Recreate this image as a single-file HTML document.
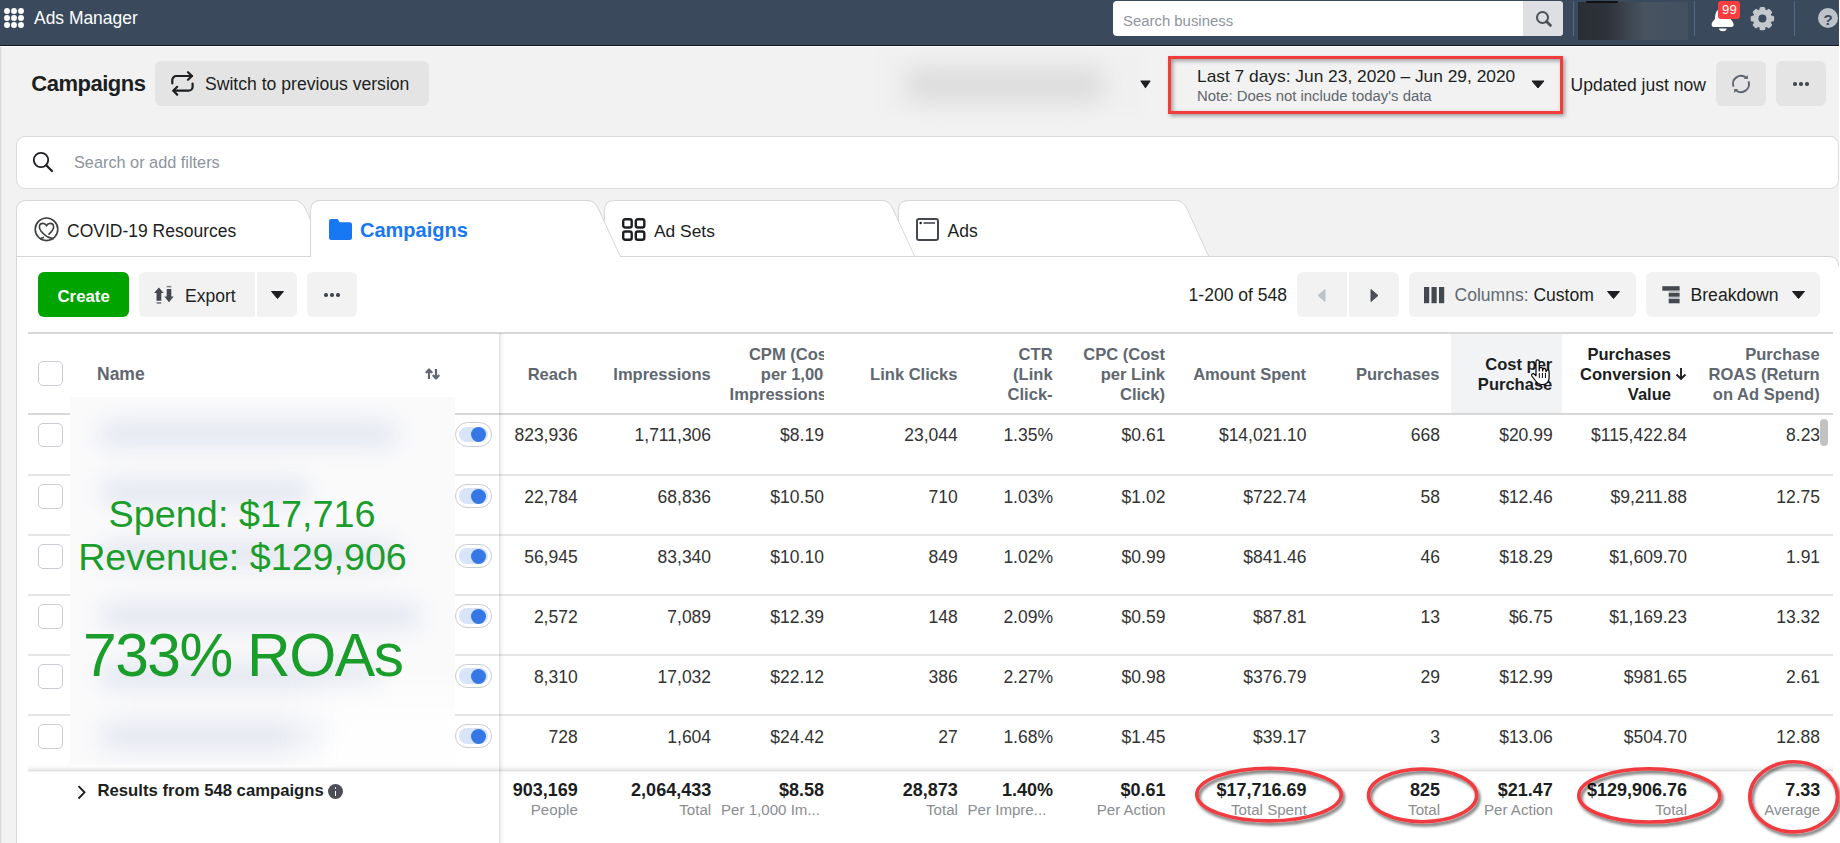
<!DOCTYPE html><html><head><meta charset="utf-8"><style>
html,body{margin:0;padding:0;overflow:hidden;}
body{width:1840px;height:843px;overflow:hidden;position:relative;background:#f2f2f2;font-family:"Liberation Sans", sans-serif;}
.t{position:absolute;white-space:nowrap;line-height:1;}
svg{position:absolute;overflow:visible;}
</style></head><body>
<div style="position:absolute;left:0px;top:0px;width:1840px;height:45px;background:#3a4a5c;"></div>
<div style="position:absolute;left:0px;top:45px;width:1840px;height:1px;background:#161b22;"></div>
<div style="position:absolute;left:0px;top:46px;width:1840px;height:1px;background:#fbfbfb;"></div>
<svg style="left:0;top:0" width="30" height="40"><circle cx="7" cy="11" r="2.95" fill="#fff"/><circle cx="7" cy="18" r="2.95" fill="#fff"/><circle cx="7" cy="25" r="2.95" fill="#fff"/><circle cx="14" cy="11" r="2.95" fill="#fff"/><circle cx="14" cy="18" r="2.95" fill="#fff"/><circle cx="14" cy="25" r="2.95" fill="#fff"/><circle cx="21" cy="11" r="2.95" fill="#fff"/><circle cx="21" cy="18" r="2.95" fill="#fff"/><circle cx="21" cy="25" r="2.95" fill="#fff"/></svg>
<div class="t" style="left:34.00px;top:10.46px;font-size:17.45px;color:#fff;">Ads Manager</div>
<div style="position:absolute;left:1113px;top:1px;width:450px;height:35px;background:#fff;border-radius:4px;"></div>
<div style="position:absolute;left:1523px;top:1px;width:40px;height:35px;background:#dddfe2;border-radius:0 4px 4px 0;"></div>
<div class="t" style="left:1123.00px;top:13.66px;font-size:14.9px;color:#90949c;">Search business</div>
<svg style="left:1535px;top:10px" width="18" height="18"><circle cx="7.5" cy="7.5" r="5.5" stroke="#4b4f56" stroke-width="2" fill="none"/><line x1="11.5" y1="11.5" x2="15.5" y2="15.5" stroke="#4b4f56" stroke-width="2.6" stroke-linecap="round"/></svg>
<div style="position:absolute;left:1573px;top:1px;width:1px;height:35px;background:#4f6885;"></div>
<div style="position:absolute;left:1578px;top:2px;width:110px;height:38px;background:linear-gradient(90deg,#2a2e35 0%,#2d3139 25%,#48535f 60%,#425060 100%);"></div>
<div style="position:absolute;left:1586px;top:1px;width:32px;height:2px;background:#111;border-radius:2px;"></div>
<div style="position:absolute;left:1694px;top:1px;width:1px;height:35px;background:#4f6885;"></div>
<svg style="left:1705px;top:0px" width="36" height="36"><path d="M10 19C10 12 12.5 8 17.8 8S25.6 12 25.6 19L27.6 21.8Q29 23.8 28.6 25.4Q28 27 26 27H9.2Q7.2 27 6.7 25.4Q6.2 23.8 7.6 21.8Z" fill="#fff"/><path d="M14.1 28.4h7.4a3.7 2.8 0 0 1-7.4 0z" fill="#fff"/></svg>
<div style="position:absolute;left:1718px;top:1px;width:22px;height:18px;background:#fa3e3e;border-radius:3px;"></div>
<div class="t" style="left:1718.40px;width:22px;text-align:center;top:3.26px;font-size:13.1px;color:#fff;">99</div>
<svg style="left:1745px;top:0px" width="36" height="36"><g transform="translate(17.4,18.6)" fill="#c4c7cc"><rect x="-2.9" y="-11.7" width="5.8" height="23.4" rx="1.6" transform="rotate(0)"/><rect x="-2.9" y="-11.7" width="5.8" height="23.4" rx="1.6" transform="rotate(45)"/><rect x="-2.9" y="-11.7" width="5.8" height="23.4" rx="1.6" transform="rotate(90)"/><rect x="-2.9" y="-11.7" width="5.8" height="23.4" rx="1.6" transform="rotate(135)"/><circle r="9.5"/></g><circle cx="17.4" cy="18.6" r="4" fill="#3a4a5c"/></svg>
<div style="position:absolute;left:1794px;top:1px;width:1px;height:35px;background:#4f6885;"></div>
<div style="position:absolute;left:1818px;top:8px;width:20px;height:20px;background:#bec3c9;border-radius:50%;"></div>
<div class="t" style="left:1818.00px;width:20px;text-align:center;top:11.50px;font-size:15px;font-weight:700;color:#3a4a5c;">?</div>
<div style="position:absolute;left:0px;top:47px;width:1px;height:796px;background:#d6d9dd;"></div>
<div style="position:absolute;left:1px;top:47px;width:1px;height:796px;background:#e8e9eb;"></div>
<div class="t" style="left:31.30px;top:72.50px;font-size:22px;font-weight:700;color:#1c1e21;letter-spacing:-0.5px;">Campaigns</div>
<div style="position:absolute;left:155px;top:61px;width:274px;height:45px;background:#e4e4e4;border-radius:6px;"></div>
<svg style="left:160px;top:62px" width="50" height="40"><g stroke="#1c1e21" stroke-width="2.2" fill="none" stroke-linecap="round" stroke-linejoin="round"><path d="M12.3 21.5V18a4 4 0 0 1 4-4H31.8"/><path d="M28 10.2L32 14 28 17.8"/><path d="M32.6 21.6V24.7a4 4 0 0 1-4 4H13.6"/><path d="M17.2 24.8L13.3 28.7 17.2 32.6"/></g></svg>
<div class="t" style="left:205.00px;top:76.16px;font-size:17.6px;color:#1c1e21;">Switch to previous version</div>
<div style="position:absolute;left:880px;top:52px;width:262px;height:62px;background:#f0f0f0;filter:blur(2px);"></div>
<div style="position:absolute;left:905px;top:68px;width:200px;height:34px;background:#dcdcdc;border-radius:17px;filter:blur(11px);"></div>
<svg style="left:1140px;top:80px" width="11" height="9"><path d="M1 1h9l-4.5 6.5z" fill="#1c1e21" stroke="#1c1e21" stroke-width="1.2" stroke-linejoin="round"/></svg>
<div style="position:absolute;left:1168px;top:56px;width:389px;height:52px;border:3px solid #f23b3b;box-shadow:2px 2px 4px rgba(0,0,0,.35), inset 2px 2px 4px rgba(0,0,0,.35);"></div>
<div class="t" style="left:1197.00px;top:68.16px;font-size:17.35px;color:#1c1e21;">Last 7 days: Jun 23, 2020 – Jun 29, 2020</div>
<div class="t" style="left:1197.00px;top:88.66px;font-size:14.9px;color:#606770;">Note: Does not include today&#39;s data</div>
<svg style="left:1531px;top:80px" width="14" height="9"><path d="M1 1h12l-6 7z" fill="#1c1e21" stroke="#1c1e21" stroke-width="1" stroke-linejoin="round"/></svg>
<div class="t" style="left:1570.60px;top:77.16px;font-size:17.5px;color:#1c1e21;">Updated just now</div>
<div style="position:absolute;left:1716px;top:61px;width:50px;height:45px;background:#e4e4e4;border-radius:6px;"></div>
<svg style="left:1721px;top:64px" width="40" height="40"><g stroke="#606770" stroke-width="2" fill="none"><path d="M12.5 22.7A8 8 0 0 1 25.2 13.8"/><path d="M27.5 17.3A8 8 0 0 1 14.8 26.2"/></g><path d="M26.9 11v4h-4z" fill="#606770"/><path d="M13.1 29v-4h4z" fill="#606770"/></svg>
<div style="position:absolute;left:1776px;top:61px;width:50px;height:45px;background:#e4e4e4;border-radius:6px;"></div>
<div style="position:absolute;left:1793.3px;top:82.3px;width:3.4px;height:3.4px;background:#444950;border-radius:50%;"></div>
<div style="position:absolute;left:1799.3px;top:82.3px;width:3.4px;height:3.4px;background:#444950;border-radius:50%;"></div>
<div style="position:absolute;left:1805.3px;top:82.3px;width:3.4px;height:3.4px;background:#444950;border-radius:50%;"></div>
<div style="position:absolute;left:16px;top:136px;width:1823px;height:53px;background:#fff;border:1px solid #d9dadc;border-radius:9px;box-sizing:border-box;"></div>
<svg style="left:32px;top:151px" width="22" height="22"><circle cx="9" cy="9" r="7.2" stroke="#1c1e21" stroke-width="1.8" fill="none"/><line x1="14.2" y1="14.2" x2="20" y2="20" stroke="#1c1e21" stroke-width="2.2" stroke-linecap="round"/></svg>
<div class="t" style="left:74.00px;top:153.65px;font-size:16.3px;color:#8d949e;">Search or add filters</div>
<svg style="left:0;top:0" width="1840" height="843"><path d="M16.5,843 L16.5,256.5 L1829,256.5 Q1838.5,256.5 1838.5,266.0 L1840,266.0 L1840,843 Z" fill="#fff" stroke="none"/><path d="M16.5,843 L16.5,256.5 L1829,256.5 Q1838.5,256.5 1838.5,266.0" fill="none" stroke="#d4d6d9" stroke-width="1"/><path d="M898.5,256.5 L898.5,210.5 Q898.5,200.5 908.5,200.5 L1176.5,200.5 Q1183.2,200.5 1187.0,209.0 L1208.8,256.5 Z" fill="#fff" stroke="#d4d6d9" stroke-width="1"/><path d="M604.5,256.5 L604.5,210.5 Q604.5,200.5 614.5,200.5 L882.5,200.5 Q889.2,200.5 893.0,209.0 L914.8,256.5 Z" fill="#fff" stroke="#d4d6d9" stroke-width="1"/><path d="M16.5,256.5 L16.5,210.5 Q16.5,200.5 26.5,200.5 L295,200.5 Q301.7,200.5 305.5,209.0 L327.3,256.5 Z" fill="#fff" stroke="#d4d6d9" stroke-width="1"/><path d="M310.5,256.5 L310.5,210.5 Q310.5,200.5 320.5,200.5 L588,200.5 Q594.7,200.5 598.5,209.0 L620.3,256.5 Z" fill="#fff" stroke="none"/><path d="M310.5,256.5 L310.5,210.5 Q310.5,200.5 320.5,200.5 L588,200.5 Q594.7,200.5 598.5,209.0 L620.3,256.5" fill="none" stroke="#d4d6d9" stroke-width="1"/><rect x="311" y="255.5" width="309" height="3" fill="#fff"/></svg>
<div style="position:absolute;left:1839px;top:0px;width:1px;height:843px;background:#fff;"></div>
<svg style="left:30px;top:213px" width="32" height="32"><g stroke="#3e4042" stroke-width="1.6" fill="none" stroke-linecap="round"><circle cx="16.5" cy="16.3" r="11.3"/><path d="M19 21.1C21.5 18.8 23.6 16.5 23.6 14C23.6 11.8 22 10.4 20 10.4C18.5 10.4 17.2 11.3 16.5 12.6C15.8 11.3 14.5 10.4 13 10.4C11 10.4 9.4 11.8 9.4 14C9.4 17.5 14 21.5 17.5 23.8C19.5 25 21.5 25.4 23.4 25.6"/><path d="M13.3 24.4C12.4 24.8 11.5 25.3 10.6 25.8"/></g></svg>
<div class="t" style="left:67.00px;top:222.66px;font-size:17.5px;color:#1c1e21;">COVID-19 Resources</div>
<svg style="left:329px;top:219px" width="23" height="21" viewBox="0 0 23 21"><path d="M0 2.2A2.2 2.2 0 0 1 2.2 0h6.3l2.2 3.2h10.1A2.2 2.2 0 0 1 23 5.4v13.4A2.2 2.2 0 0 1 20.8 21H2.2A2.2 2.2 0 0 1 0 18.8z" fill="#1877f2"/></svg>
<div class="t" style="left:360.00px;top:219.80px;font-size:20px;font-weight:700;color:#1877f2;">Campaigns</div>
<svg style="left:622px;top:218px" width="24" height="23" viewBox="0 0 24 23"><g stroke="#1c1e21" stroke-width="2.4" fill="none"><rect x="1.2" y="1.2" width="8.5" height="8.3" rx="2"/><rect x="13.8" y="1.2" width="8.5" height="8.3" rx="2"/><rect x="1.2" y="13.5" width="8.5" height="8.3" rx="2"/><rect x="13.8" y="13.5" width="8.5" height="8.3" rx="2"/></g></svg>
<div class="t" style="left:654.00px;top:222.66px;font-size:17.4px;color:#1c1e21;">Ad Sets</div>
<svg style="left:916px;top:218px" width="23" height="23" viewBox="0 0 23 23"><rect x="1" y="1" width="21" height="21" rx="2" stroke="#444950" stroke-width="2" fill="none"/><circle cx="4.6" cy="5" r="1.2" fill="#1c1e21"/><line x1="7.5" y1="5" x2="19" y2="5" stroke="#444950" stroke-width="1.6"/></svg>
<div class="t" style="left:947.50px;top:222.66px;font-size:17.5px;color:#1c1e21;">Ads</div>
<div style="position:absolute;left:38px;top:272px;width:91px;height:45px;background:#00a400;border-radius:6px;"></div>
<div class="t" style="left:57.50px;top:288.70px;font-size:16.8px;font-weight:700;color:#fff;">Create</div>
<div style="position:absolute;left:139px;top:272px;width:115.6px;height:45px;background:#f2f2f2;border-radius:6px 0 0 6px;"></div>
<div style="position:absolute;left:257px;top:272px;width:39.7px;height:45px;background:#f2f2f2;border-radius:0 6px 6px 0;"></div>
<svg style="left:148px;top:280px" width="32" height="30"><g fill="#444950"><path d="M10.9 7.4L6.1 12.9H8.5V20.8H13.3V12.9H15.7Z"/><path d="M18.7 8.9H23.3V16.4H25.7L21 22.2 16.3 16.4H18.7Z"/></g><g fill="#7d8288"><rect x="8.6" y="22.1" width="4.6" height="1.7"/><rect x="18.7" y="5.9" width="4.6" height="1.5"/></g></svg>
<div class="t" style="left:185.00px;top:287.66px;font-size:17.5px;color:#1c1e21;">Export</div>
<svg style="left:270.5px;top:291px" width="13" height="9"><path d="M0.5 0.5h12l-6 7z" fill="#1c1e21" stroke="#1c1e21" stroke-width="1" stroke-linejoin="round"/></svg>
<div style="position:absolute;left:307px;top:272px;width:50px;height:45px;background:#f2f2f2;border-radius:6px;"></div>
<div style="position:absolute;left:324.3px;top:293.3px;width:3.4px;height:3.4px;background:#444950;border-radius:50%;"></div>
<div style="position:absolute;left:330.3px;top:293.3px;width:3.4px;height:3.4px;background:#444950;border-radius:50%;"></div>
<div style="position:absolute;left:336.3px;top:293.3px;width:3.4px;height:3.4px;background:#444950;border-radius:50%;"></div>
<div class="t" style="left:1188.60px;top:287.16px;font-size:17.55px;color:#1c1e21;">1-200 of 548</div>
<div style="position:absolute;left:1297px;top:272px;width:50px;height:44.5px;background:#f2f2f2;border-radius:6px 0 0 6px;"></div>
<div style="position:absolute;left:1349px;top:272px;width:50px;height:44.5px;background:#f2f2f2;border-radius:0 6px 6px 0;"></div>
<svg style="left:1317px;top:289px" width="9" height="13"><path d="M8 0.5v12l-7-6z" fill="#bec3c9" stroke="#bec3c9" stroke-width="1" stroke-linejoin="round"/></svg>
<svg style="left:1370px;top:289px" width="9" height="13"><path d="M1 0.5v12l7-6z" fill="#4b4f56" stroke="#4b4f56" stroke-width="1" stroke-linejoin="round"/></svg>
<div style="position:absolute;left:1409px;top:272px;width:227px;height:44.5px;background:#f2f2f2;border-radius:6px;"></div>
<svg style="left:1424px;top:287px" width="21" height="17"><rect x="0" y="0" width="5.2" height="16.2" fill="#444950"/><rect x="7.5" y="0" width="5.2" height="16.2" fill="#444950"/><rect x="15" y="0" width="5.2" height="16.2" fill="#444950"/></svg>
<div class="t" style="left:1454.50px;top:287.16px;font-size:17.55px;color:#606770;">Columns: <span style="color:#1c1e21">Custom</span></div>
<svg style="left:1606.5px;top:291px" width="13" height="9"><path d="M0.5 0.5h12l-6 7z" fill="#1c1e21" stroke="#1c1e21" stroke-width="1" stroke-linejoin="round"/></svg>
<div style="position:absolute;left:1646px;top:272px;width:174px;height:44.5px;background:#f2f2f2;border-radius:6px;"></div>
<svg style="left:1655px;top:280px" width="30" height="30"><g fill="#444950"><rect x="7.3" y="6.2" width="17.3" height="4.5"/><rect x="13.7" y="12.8" width="10.9" height="4"/><rect x="13.7" y="19" width="10.9" height="4.3"/></g><g fill="#bcc0c4"><rect x="13.7" y="10.7" width="10.9" height="2.1"/><rect x="13.7" y="16.8" width="10.9" height="2.2"/></g></svg>
<div class="t" style="left:1690.50px;top:287.16px;font-size:17.6px;color:#1c1e21;">Breakdown</div>
<svg style="left:1791.5px;top:291px" width="13" height="9"><path d="M0.5 0.5h12l-6 7z" fill="#1c1e21" stroke="#1c1e21" stroke-width="1" stroke-linejoin="round"/></svg>
<div style="position:absolute;left:28px;top:332px;width:1805px;height:1.5px;background:#d8d8d8;"></div>
<div style="position:absolute;left:1451px;top:333.5px;width:111px;height:79.5px;background:#f2f3f5;"></div>
<div style="position:absolute;left:28px;top:413px;width:1805px;height:1.5px;background:#d8d8d8;"></div>
<div style="position:absolute;left:28px;top:474px;width:1805px;height:2px;background:#e6e6e6;"></div>
<div style="position:absolute;left:28px;top:534px;width:1805px;height:2px;background:#e6e6e6;"></div>
<div style="position:absolute;left:28px;top:594px;width:1805px;height:2px;background:#e6e6e6;"></div>
<div style="position:absolute;left:28px;top:654px;width:1805px;height:2px;background:#e6e6e6;"></div>
<div style="position:absolute;left:28px;top:714px;width:1805px;height:2px;background:#e6e6e6;"></div>
<div style="position:absolute;left:38px;top:361.3px;width:24.7px;height:24.8px;box-sizing:border-box;border:1.2px solid #c8ccd2;border-radius:5px;background:#fff;"></div>
<div class="t" style="left:97.00px;top:366.30px;font-size:17.5px;font-weight:700;color:#606770;">Name</div>
<svg style="left:425px;top:368px" width="15" height="12" viewBox="0 0 15 12"><path d="M4 11V2.5M0.8 5L4 1.5 7.2 5" stroke="#606770" stroke-width="2.2" fill="none" stroke-linejoin="round"/><path d="M11 1V9.5M7.8 7L11 10.5 14.2 7" stroke="#606770" stroke-width="2.2" fill="none" stroke-linejoin="round"/></svg>
<div class="t" style="left:377.30px;width:200px;text-align:right;top:367.20px;font-size:16.55px;font-weight:700;color:#606770;">Reach</div>
<div class="t" style="left:510.70px;width:200px;text-align:right;top:367.20px;font-size:16.55px;font-weight:700;color:#606770;">Impressions</div>
<div style="position:absolute;left:700px;top:340px;width:123.5px;height:70px;overflow:hidden">
<div class="t" style="left:-67.50px;width:200px;text-align:right;top:7.00px;font-size:16.55px;font-weight:700;color:#606770;">CPM (Cost</div>
</div>
<div style="position:absolute;left:700px;top:340px;width:123.5px;height:70px;overflow:hidden">
<div class="t" style="left:-67.50px;width:200px;text-align:right;top:27.00px;font-size:16.55px;font-weight:700;color:#606770;">per 1,000</div>
</div>
<div style="position:absolute;left:700px;top:340px;width:123.5px;height:70px;overflow:hidden">
<div class="t" style="left:-67.50px;width:200px;text-align:right;top:47.00px;font-size:16.55px;font-weight:700;color:#606770;">Impressions)</div>
</div>
<div class="t" style="left:757.40px;width:200px;text-align:right;top:367.20px;font-size:16.55px;font-weight:700;color:#606770;">Link Clicks</div>
<div class="t" style="left:852.60px;width:200px;text-align:right;top:347.00px;font-size:16.55px;font-weight:700;color:#606770;">CTR</div>
<div class="t" style="left:852.60px;width:200px;text-align:right;top:367.00px;font-size:16.55px;font-weight:700;color:#606770;">(Link</div>
<div class="t" style="left:852.60px;width:200px;text-align:right;top:387.00px;font-size:16.55px;font-weight:700;color:#606770;">Click-</div>
<div class="t" style="left:965.00px;width:200px;text-align:right;top:347.00px;font-size:16.55px;font-weight:700;color:#606770;">CPC (Cost</div>
<div class="t" style="left:965.00px;width:200px;text-align:right;top:367.00px;font-size:16.55px;font-weight:700;color:#606770;">per Link</div>
<div class="t" style="left:965.00px;width:200px;text-align:right;top:387.00px;font-size:16.55px;font-weight:700;color:#606770;">Click)</div>
<div class="t" style="left:1106.10px;width:200px;text-align:right;top:367.20px;font-size:16.55px;font-weight:700;color:#606770;">Amount Spent</div>
<div class="t" style="left:1239.50px;width:200px;text-align:right;top:367.20px;font-size:16.55px;font-weight:700;color:#606770;">Purchases</div>
<div class="t" style="left:1352.30px;width:200px;text-align:right;top:357.10px;font-size:16.55px;font-weight:700;color:#1c1e21;">Cost per</div>
<div class="t" style="left:1352.30px;width:200px;text-align:right;top:376.90px;font-size:16.55px;font-weight:700;color:#1c1e21;">Purchase</div>
<div class="t" style="left:1471.00px;width:200px;text-align:right;top:347.00px;font-size:16.55px;font-weight:700;color:#1c1e21;">Purchases</div>
<div class="t" style="left:1471.00px;width:200px;text-align:right;top:367.00px;font-size:16.55px;font-weight:700;color:#1c1e21;">Conversion</div>
<div class="t" style="left:1471.00px;width:200px;text-align:right;top:387.00px;font-size:16.55px;font-weight:700;color:#1c1e21;">Value</div>
<svg style="left:1675px;top:367px" width="12" height="13" viewBox="0 0 12 13"><path d="M6 1V11.5M1.5 7.5L6 12 10.5 7.5" stroke="#1c1e21" stroke-width="1.9" fill="none"/></svg>
<div class="t" style="left:1619.70px;width:200px;text-align:right;top:347.00px;font-size:16.55px;font-weight:700;color:#606770;">Purchase</div>
<div class="t" style="left:1619.70px;width:200px;text-align:right;top:367.00px;font-size:16.55px;font-weight:700;color:#606770;">ROAS (Return</div>
<div class="t" style="left:1619.70px;width:200px;text-align:right;top:387.00px;font-size:16.55px;font-weight:700;color:#606770;">on Ad Spend)</div>
<div style="position:absolute;left:38px;top:422.5px;width:24.7px;height:24.8px;box-sizing:border-box;border:1.2px solid #c8ccd2;border-radius:5px;background:#fff;"></div>
<div style="position:absolute;left:455px;top:422.2px;width:36.7px;height:24.4px;box-sizing:border-box;border:1.2px solid #c9ccd1;border-radius:13px;background:#fff;"></div>
<div style="position:absolute;left:459px;top:426.7px;width:28.5px;height:15.7px;background:#d8e4fb;border-radius:8px;"></div>
<div style="position:absolute;left:471px;top:427.09999999999997px;width:15.2px;height:15.2px;background:#3578e5;border-radius:50%;"></div>
<div class="t" style="left:377.70px;width:200px;text-align:right;top:427.06px;font-size:17.5px;color:#333;">823,936</div>
<div class="t" style="left:511.10px;width:200px;text-align:right;top:427.06px;font-size:17.5px;color:#333;">1,711,306</div>
<div class="t" style="left:623.90px;width:200px;text-align:right;top:427.06px;font-size:17.5px;color:#333;">$8.19</div>
<div class="t" style="left:757.80px;width:200px;text-align:right;top:427.06px;font-size:17.5px;color:#333;">23,044</div>
<div class="t" style="left:853.00px;width:200px;text-align:right;top:427.06px;font-size:17.5px;color:#333;">1.35%</div>
<div class="t" style="left:965.40px;width:200px;text-align:right;top:427.06px;font-size:17.5px;color:#333;">$0.61</div>
<div class="t" style="left:1106.50px;width:200px;text-align:right;top:427.06px;font-size:17.5px;color:#333;">$14,021.10</div>
<div class="t" style="left:1239.90px;width:200px;text-align:right;top:427.06px;font-size:17.5px;color:#333;">668</div>
<div class="t" style="left:1352.70px;width:200px;text-align:right;top:427.06px;font-size:17.5px;color:#333;">$20.99</div>
<div class="t" style="left:1487.00px;width:200px;text-align:right;top:427.06px;font-size:17.5px;color:#333;">$115,422.84</div>
<div class="t" style="left:1620.10px;width:200px;text-align:right;top:427.06px;font-size:17.5px;color:#333;">8.23</div>
<div style="position:absolute;left:38px;top:484px;width:24.7px;height:24.8px;box-sizing:border-box;border:1.2px solid #c8ccd2;border-radius:5px;background:#fff;"></div>
<div style="position:absolute;left:455px;top:483.7px;width:36.7px;height:24.4px;box-sizing:border-box;border:1.2px solid #c9ccd1;border-radius:13px;background:#fff;"></div>
<div style="position:absolute;left:459px;top:488.2px;width:28.5px;height:15.7px;background:#d8e4fb;border-radius:8px;"></div>
<div style="position:absolute;left:471px;top:488.59999999999997px;width:15.2px;height:15.2px;background:#3578e5;border-radius:50%;"></div>
<div class="t" style="left:377.70px;width:200px;text-align:right;top:488.76px;font-size:17.5px;color:#333;">22,784</div>
<div class="t" style="left:511.10px;width:200px;text-align:right;top:488.76px;font-size:17.5px;color:#333;">68,836</div>
<div class="t" style="left:623.90px;width:200px;text-align:right;top:488.76px;font-size:17.5px;color:#333;">$10.50</div>
<div class="t" style="left:757.80px;width:200px;text-align:right;top:488.76px;font-size:17.5px;color:#333;">710</div>
<div class="t" style="left:853.00px;width:200px;text-align:right;top:488.76px;font-size:17.5px;color:#333;">1.03%</div>
<div class="t" style="left:965.40px;width:200px;text-align:right;top:488.76px;font-size:17.5px;color:#333;">$1.02</div>
<div class="t" style="left:1106.50px;width:200px;text-align:right;top:488.76px;font-size:17.5px;color:#333;">$722.74</div>
<div class="t" style="left:1239.90px;width:200px;text-align:right;top:488.76px;font-size:17.5px;color:#333;">58</div>
<div class="t" style="left:1352.70px;width:200px;text-align:right;top:488.76px;font-size:17.5px;color:#333;">$12.46</div>
<div class="t" style="left:1487.00px;width:200px;text-align:right;top:488.76px;font-size:17.5px;color:#333;">$9,211.88</div>
<div class="t" style="left:1620.10px;width:200px;text-align:right;top:488.76px;font-size:17.5px;color:#333;">12.75</div>
<div style="position:absolute;left:38px;top:544px;width:24.7px;height:24.8px;box-sizing:border-box;border:1.2px solid #c8ccd2;border-radius:5px;background:#fff;"></div>
<div style="position:absolute;left:455px;top:543.7px;width:36.7px;height:24.4px;box-sizing:border-box;border:1.2px solid #c9ccd1;border-radius:13px;background:#fff;"></div>
<div style="position:absolute;left:459px;top:548.2px;width:28.5px;height:15.7px;background:#d8e4fb;border-radius:8px;"></div>
<div style="position:absolute;left:471px;top:548.6px;width:15.2px;height:15.2px;background:#3578e5;border-radius:50%;"></div>
<div class="t" style="left:377.70px;width:200px;text-align:right;top:548.86px;font-size:17.5px;color:#333;">56,945</div>
<div class="t" style="left:511.10px;width:200px;text-align:right;top:548.86px;font-size:17.5px;color:#333;">83,340</div>
<div class="t" style="left:623.90px;width:200px;text-align:right;top:548.86px;font-size:17.5px;color:#333;">$10.10</div>
<div class="t" style="left:757.80px;width:200px;text-align:right;top:548.86px;font-size:17.5px;color:#333;">849</div>
<div class="t" style="left:853.00px;width:200px;text-align:right;top:548.86px;font-size:17.5px;color:#333;">1.02%</div>
<div class="t" style="left:965.40px;width:200px;text-align:right;top:548.86px;font-size:17.5px;color:#333;">$0.99</div>
<div class="t" style="left:1106.50px;width:200px;text-align:right;top:548.86px;font-size:17.5px;color:#333;">$841.46</div>
<div class="t" style="left:1239.90px;width:200px;text-align:right;top:548.86px;font-size:17.5px;color:#333;">46</div>
<div class="t" style="left:1352.70px;width:200px;text-align:right;top:548.86px;font-size:17.5px;color:#333;">$18.29</div>
<div class="t" style="left:1487.00px;width:200px;text-align:right;top:548.86px;font-size:17.5px;color:#333;">$1,609.70</div>
<div class="t" style="left:1620.10px;width:200px;text-align:right;top:548.86px;font-size:17.5px;color:#333;">1.91</div>
<div style="position:absolute;left:38px;top:604px;width:24.7px;height:24.8px;box-sizing:border-box;border:1.2px solid #c8ccd2;border-radius:5px;background:#fff;"></div>
<div style="position:absolute;left:455px;top:603.7px;width:36.7px;height:24.4px;box-sizing:border-box;border:1.2px solid #c9ccd1;border-radius:13px;background:#fff;"></div>
<div style="position:absolute;left:459px;top:608.2px;width:28.5px;height:15.7px;background:#d8e4fb;border-radius:8px;"></div>
<div style="position:absolute;left:471px;top:608.6px;width:15.2px;height:15.2px;background:#3578e5;border-radius:50%;"></div>
<div class="t" style="left:377.70px;width:200px;text-align:right;top:608.66px;font-size:17.5px;color:#333;">2,572</div>
<div class="t" style="left:511.10px;width:200px;text-align:right;top:608.66px;font-size:17.5px;color:#333;">7,089</div>
<div class="t" style="left:623.90px;width:200px;text-align:right;top:608.66px;font-size:17.5px;color:#333;">$12.39</div>
<div class="t" style="left:757.80px;width:200px;text-align:right;top:608.66px;font-size:17.5px;color:#333;">148</div>
<div class="t" style="left:853.00px;width:200px;text-align:right;top:608.66px;font-size:17.5px;color:#333;">2.09%</div>
<div class="t" style="left:965.40px;width:200px;text-align:right;top:608.66px;font-size:17.5px;color:#333;">$0.59</div>
<div class="t" style="left:1106.50px;width:200px;text-align:right;top:608.66px;font-size:17.5px;color:#333;">$87.81</div>
<div class="t" style="left:1239.90px;width:200px;text-align:right;top:608.66px;font-size:17.5px;color:#333;">13</div>
<div class="t" style="left:1352.70px;width:200px;text-align:right;top:608.66px;font-size:17.5px;color:#333;">$6.75</div>
<div class="t" style="left:1487.00px;width:200px;text-align:right;top:608.66px;font-size:17.5px;color:#333;">$1,169.23</div>
<div class="t" style="left:1620.10px;width:200px;text-align:right;top:608.66px;font-size:17.5px;color:#333;">13.32</div>
<div style="position:absolute;left:38px;top:664px;width:24.7px;height:24.8px;box-sizing:border-box;border:1.2px solid #c8ccd2;border-radius:5px;background:#fff;"></div>
<div style="position:absolute;left:455px;top:663.7px;width:36.7px;height:24.4px;box-sizing:border-box;border:1.2px solid #c9ccd1;border-radius:13px;background:#fff;"></div>
<div style="position:absolute;left:459px;top:668.2px;width:28.5px;height:15.7px;background:#d8e4fb;border-radius:8px;"></div>
<div style="position:absolute;left:471px;top:668.6px;width:15.2px;height:15.2px;background:#3578e5;border-radius:50%;"></div>
<div class="t" style="left:377.70px;width:200px;text-align:right;top:668.86px;font-size:17.5px;color:#333;">8,310</div>
<div class="t" style="left:511.10px;width:200px;text-align:right;top:668.86px;font-size:17.5px;color:#333;">17,032</div>
<div class="t" style="left:623.90px;width:200px;text-align:right;top:668.86px;font-size:17.5px;color:#333;">$22.12</div>
<div class="t" style="left:757.80px;width:200px;text-align:right;top:668.86px;font-size:17.5px;color:#333;">386</div>
<div class="t" style="left:853.00px;width:200px;text-align:right;top:668.86px;font-size:17.5px;color:#333;">2.27%</div>
<div class="t" style="left:965.40px;width:200px;text-align:right;top:668.86px;font-size:17.5px;color:#333;">$0.98</div>
<div class="t" style="left:1106.50px;width:200px;text-align:right;top:668.86px;font-size:17.5px;color:#333;">$376.79</div>
<div class="t" style="left:1239.90px;width:200px;text-align:right;top:668.86px;font-size:17.5px;color:#333;">29</div>
<div class="t" style="left:1352.70px;width:200px;text-align:right;top:668.86px;font-size:17.5px;color:#333;">$12.99</div>
<div class="t" style="left:1487.00px;width:200px;text-align:right;top:668.86px;font-size:17.5px;color:#333;">$981.65</div>
<div class="t" style="left:1620.10px;width:200px;text-align:right;top:668.86px;font-size:17.5px;color:#333;">2.61</div>
<div style="position:absolute;left:38px;top:724px;width:24.7px;height:24.8px;box-sizing:border-box;border:1.2px solid #c8ccd2;border-radius:5px;background:#fff;"></div>
<div style="position:absolute;left:455px;top:723.7px;width:36.7px;height:24.4px;box-sizing:border-box;border:1.2px solid #c9ccd1;border-radius:13px;background:#fff;"></div>
<div style="position:absolute;left:459px;top:728.2px;width:28.5px;height:15.7px;background:#d8e4fb;border-radius:8px;"></div>
<div style="position:absolute;left:471px;top:728.6px;width:15.2px;height:15.2px;background:#3578e5;border-radius:50%;"></div>
<div class="t" style="left:377.70px;width:200px;text-align:right;top:728.76px;font-size:17.5px;color:#333;">728</div>
<div class="t" style="left:511.10px;width:200px;text-align:right;top:728.76px;font-size:17.5px;color:#333;">1,604</div>
<div class="t" style="left:623.90px;width:200px;text-align:right;top:728.76px;font-size:17.5px;color:#333;">$24.42</div>
<div class="t" style="left:757.80px;width:200px;text-align:right;top:728.76px;font-size:17.5px;color:#333;">27</div>
<div class="t" style="left:853.00px;width:200px;text-align:right;top:728.76px;font-size:17.5px;color:#333;">1.68%</div>
<div class="t" style="left:965.40px;width:200px;text-align:right;top:728.76px;font-size:17.5px;color:#333;">$1.45</div>
<div class="t" style="left:1106.50px;width:200px;text-align:right;top:728.76px;font-size:17.5px;color:#333;">$39.17</div>
<div class="t" style="left:1239.90px;width:200px;text-align:right;top:728.76px;font-size:17.5px;color:#333;">3</div>
<div class="t" style="left:1352.70px;width:200px;text-align:right;top:728.76px;font-size:17.5px;color:#333;">$13.06</div>
<div class="t" style="left:1487.00px;width:200px;text-align:right;top:728.76px;font-size:17.5px;color:#333;">$504.70</div>
<div class="t" style="left:1620.10px;width:200px;text-align:right;top:728.76px;font-size:17.5px;color:#333;">12.88</div>
<div style="position:absolute;left:1819.5px;top:419px;width:8.2px;height:26.6px;background:#c2c2c2;border-radius:4px;"></div>
<div style="position:absolute;left:28px;top:765px;width:1805px;height:6px;background:linear-gradient(rgba(0,0,0,0),rgba(0,0,0,.04) 55%,rgba(0,0,0,.13));"></div>
<div style="position:absolute;left:28px;top:771px;width:1805px;height:1.5px;background:linear-gradient(rgba(0,0,0,.05),rgba(0,0,0,0));"></div>
<svg style="left:77px;top:785px" width="10" height="15"><path d="M1.5 1.2L7.5 7.3 1.5 13.5" stroke="#1c1e21" stroke-width="1.9" fill="none"/></svg>
<div class="t" style="left:97.50px;top:782.80px;font-size:16.7px;font-weight:700;color:#1c1e21;">Results from 548 campaigns</div>
<div style="position:absolute;left:328px;top:784px;width:15px;height:15px;background:#4b4f56;border-radius:50%;"></div>
<div style="position:absolute;left:334.6px;top:791px;width:1.9px;height:5px;background:#fff;"></div>
<div style="position:absolute;left:334.6px;top:787.2px;width:1.9px;height:1.9px;background:#fff;border-radius:50%;"></div>
<div class="t" style="left:377.80px;width:200px;text-align:right;top:780.50px;font-size:18px;font-weight:700;color:#1c1e21;">903,169</div>
<div class="t" style="left:511.20px;width:200px;text-align:right;top:780.50px;font-size:18px;font-weight:700;color:#1c1e21;">2,064,433</div>
<div class="t" style="left:624.00px;width:200px;text-align:right;top:780.50px;font-size:18px;font-weight:700;color:#1c1e21;">$8.58</div>
<div class="t" style="left:757.90px;width:200px;text-align:right;top:780.50px;font-size:18px;font-weight:700;color:#1c1e21;">28,873</div>
<div class="t" style="left:853.10px;width:200px;text-align:right;top:780.50px;font-size:18px;font-weight:700;color:#1c1e21;">1.40%</div>
<div class="t" style="left:965.50px;width:200px;text-align:right;top:780.50px;font-size:18px;font-weight:700;color:#1c1e21;">$0.61</div>
<div class="t" style="left:1106.60px;width:200px;text-align:right;top:780.50px;font-size:18px;font-weight:700;color:#1c1e21;">$17,716.69</div>
<div class="t" style="left:1240.00px;width:200px;text-align:right;top:780.50px;font-size:18px;font-weight:700;color:#1c1e21;">825</div>
<div class="t" style="left:1352.80px;width:200px;text-align:right;top:780.50px;font-size:18px;font-weight:700;color:#1c1e21;">$21.47</div>
<div class="t" style="left:1487.10px;width:200px;text-align:right;top:780.50px;font-size:18px;font-weight:700;color:#1c1e21;">$129,906.76</div>
<div class="t" style="left:1620.20px;width:200px;text-align:right;top:780.50px;font-size:18px;font-weight:700;color:#1c1e21;">7.33</div>
<div class="t" style="left:377.80px;width:200px;text-align:right;top:802.16px;font-size:15.1px;color:#8a8d91;">People</div>
<div class="t" style="left:511.20px;width:200px;text-align:right;top:802.16px;font-size:15.1px;color:#8a8d91;">Total</div>
<div class="t" style="left:757.90px;width:200px;text-align:right;top:802.16px;font-size:15.1px;color:#8a8d91;">Total</div>
<div class="t" style="left:965.50px;width:200px;text-align:right;top:802.16px;font-size:15.1px;color:#8a8d91;">Per Action</div>
<div class="t" style="left:1106.60px;width:200px;text-align:right;top:802.16px;font-size:15.1px;color:#8a8d91;">Total Spent</div>
<div class="t" style="left:1240.00px;width:200px;text-align:right;top:802.16px;font-size:15.1px;color:#8a8d91;">Total</div>
<div class="t" style="left:1352.80px;width:200px;text-align:right;top:802.16px;font-size:15.1px;color:#8a8d91;">Per Action</div>
<div class="t" style="left:1487.10px;width:200px;text-align:right;top:802.16px;font-size:15.1px;color:#8a8d91;">Total</div>
<div class="t" style="left:1620.20px;width:200px;text-align:right;top:802.16px;font-size:15.1px;color:#8a8d91;">Average</div>
<div class="t" style="left:721.00px;top:802.16px;font-size:15.1px;color:#8a8d91;">Per 1,000 Im...</div>
<div class="t" style="left:967.50px;top:802.16px;font-size:15.1px;color:#8a8d91;">Per Impre...</div>
<div style="position:absolute;left:499px;top:333px;width:5px;height:510px;background:linear-gradient(90deg,rgba(0,0,0,.12),rgba(0,0,0,.06) 35%,rgba(0,0,0,0));"></div>
<div style="position:absolute;left:70px;top:397px;width:385px;height:368px;background:#fafafb;overflow:hidden">
<div style="position:absolute;left:28px;top:24px;width:300px;height:26px;background:#e3e7f0;border-radius:13px;filter:blur(11px);"></div>
<div style="position:absolute;left:30px;top:82px;width:210px;height:26px;background:#e3e7f0;border-radius:13px;filter:blur(11px);"></div>
<div style="position:absolute;left:30px;top:144px;width:300px;height:26px;background:#e3e7f0;border-radius:13px;filter:blur(11px);"></div>
<div style="position:absolute;left:30px;top:206px;width:320px;height:26px;background:#e3e7f0;border-radius:13px;filter:blur(11px);"></div>
<div style="position:absolute;left:30px;top:266px;width:280px;height:26px;background:#e3e7f0;border-radius:13px;filter:blur(11px);"></div>
<div style="position:absolute;left:30px;top:326px;width:240px;height:26px;background:#e3e7f0;border-radius:13px;filter:blur(11px);"></div>
<div style="position:absolute;left:240px;top:300px;width:240px;height:140px;background:#fefefe;filter:blur(24px);"></div>
</div>
<div class="t" style="left:108.60px;top:496.36px;font-size:37.8px;color:#1b9d2b;">Spend: $17,716</div>
<div class="t" style="left:78.20px;top:538.76px;font-size:37.65px;color:#1b9d2b;">Revenue: $129,906</div>
<div class="t" style="left:83.00px;top:625.17px;font-size:60.5px;color:#1b9d2b;letter-spacing:-1.5px;">733% ROAs</div>
<svg style="left:0;top:0" width="1840" height="843"><defs><filter id="sh" x="-20%" y="-30%" width="140%" height="160%"><feGaussianBlur in="SourceAlpha" stdDeviation="1.6"/><feOffset dx="1.5" dy="2.5"/><feComponentTransfer><feFuncA type="linear" slope="0.55"/></feComponentTransfer><feMerge><feMergeNode/><feMergeNode in="SourceGraphic"/></feMerge></filter></defs><ellipse cx="1269.0" cy="794.55" rx="72.2" ry="26.350000000000033" fill="none" stroke="#f03a3f" stroke-width="3.6" filter="url(#sh)"/><ellipse cx="1422.5500000000002" cy="795.35" rx="54.050000000000026" ry="26.349999999999977" fill="none" stroke="#f03a3f" stroke-width="3.6" filter="url(#sh)"/><ellipse cx="1649.3" cy="795.4" rx="70.49999999999996" ry="26.599999999999977" fill="none" stroke="#f03a3f" stroke-width="3.6" filter="url(#sh)"/><ellipse cx="1793.65" cy="796.85" rx="43.84999999999998" ry="35.050000000000026" fill="none" stroke="#f03a3f" stroke-width="3.6" filter="url(#sh)"/></svg>
<svg style="left:1529.3px;top:358.8px" width="24" height="28" viewBox="0 0 24 28"><path d="M7 2.5a1.6 1.6 0 0 1 3.2 0V12l.3-2.2a1.5 1.5 0 0 1 3 .2l.1 2 .4-1.5a1.5 1.5 0 0 1 2.9.4l.1 1.8.5-1a1.4 1.4 0 0 1 2.6.8v6.5c0 3.5-2.5 6.5-6 6.5h-2c-2.3 0-3.8-1.2-5-3L2.8 17a1.6 1.6 0 0 1 2.4-2L7 16.8z" fill="#fff" stroke="#000" stroke-width="1.2" stroke-linejoin="round"/><path d="M10.3 14v5M13.4 14v5M16.4 14v5" stroke="#000" stroke-width="1"/></svg>
</body></html>
